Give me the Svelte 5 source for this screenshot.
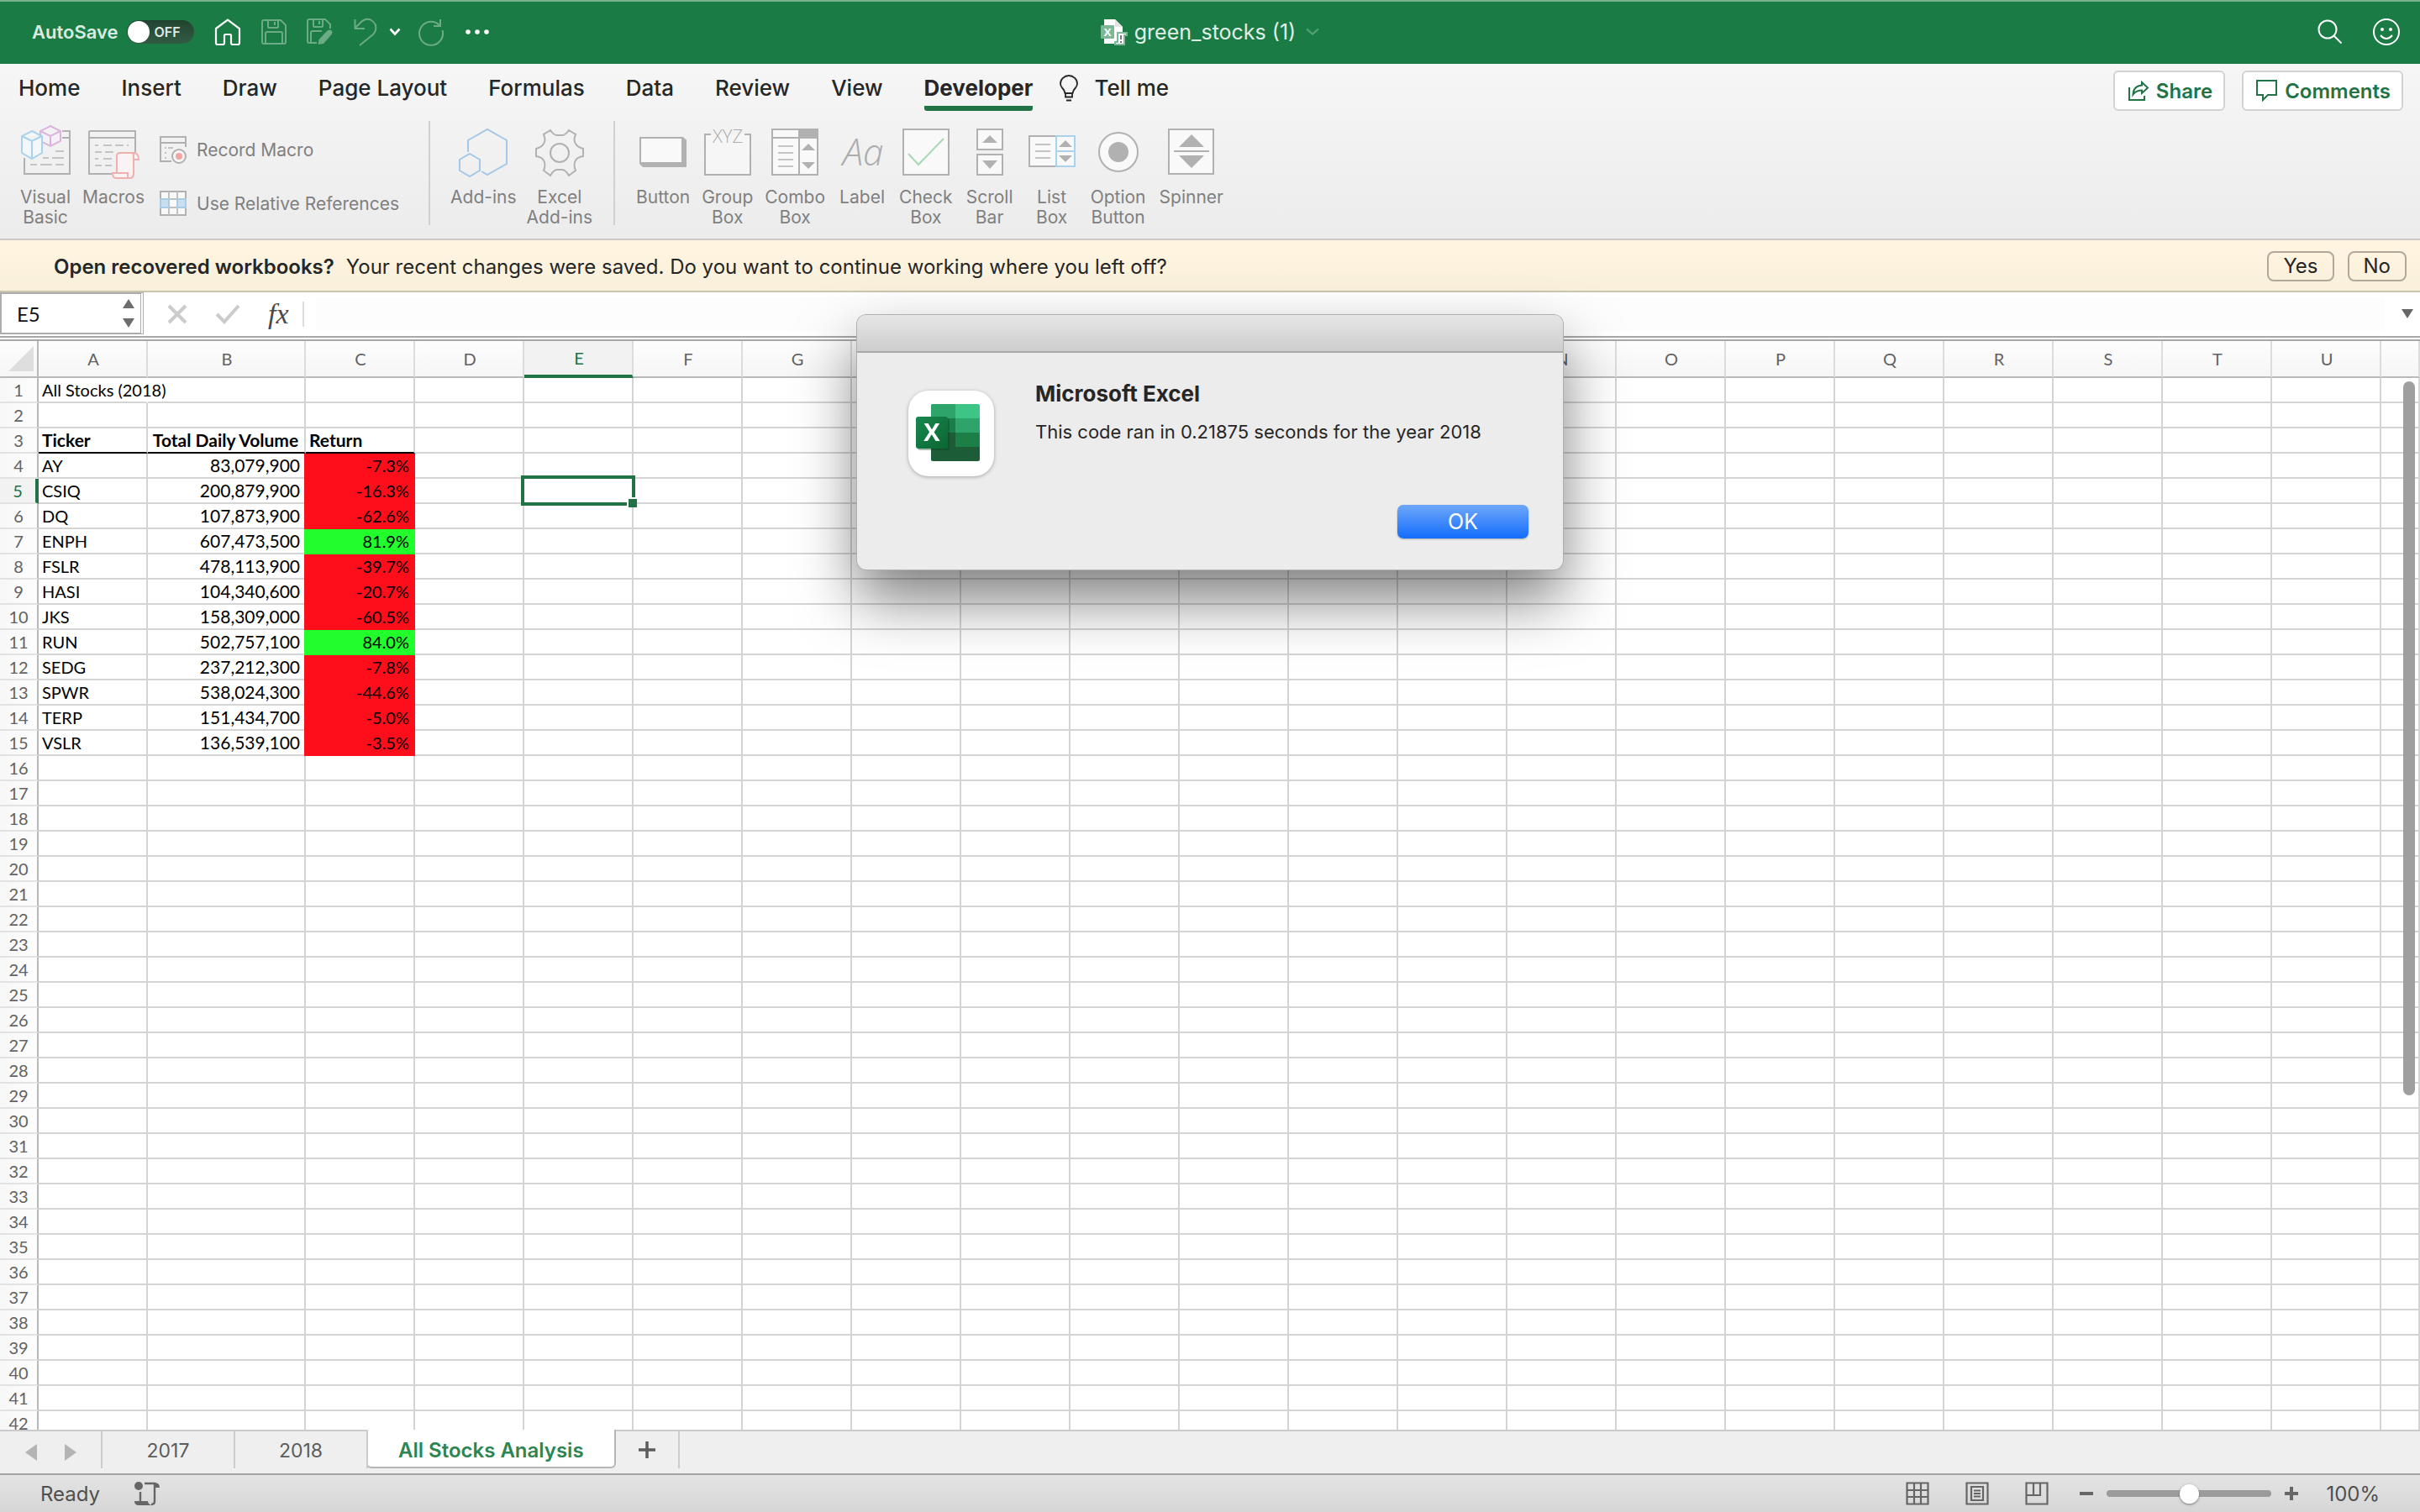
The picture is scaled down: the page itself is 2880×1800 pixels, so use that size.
<script>
  const menuTabs = ['Home', 'Insert', 'Draw', 'Page Layout', 'Formulas', 'Data', 'Review', 'View', 'Developer'];

  const columns = 'ABCDEFGHIJKLMNOPQRSTU'.split('');
  const rowNumbers = Array.from({ length: 42 }, (_, i) => i + 1);

  const stocks = [
    ['AY', '83,079,900', '-7.3%'],
    ['CSIQ', '200,879,900', '-16.3%'],
    ['DQ', '107,873,900', '-62.6%'],
    ['ENPH', '607,473,500', '81.9%'],
    ['FSLR', '478,113,900', '-39.7%'],
    ['HASI', '104,340,600', '-20.7%'],
    ['JKS', '158,309,000', '-60.5%'],
    ['RUN', '502,757,100', '84.0%'],
    ['SEDG', '237,212,300', '-7.8%'],
    ['SPWR', '538,024,300', '-44.6%'],
    ['TERP', '151,434,700', '-5.0%'],
    ['VSLR', '136,539,100', '-3.5%'],
  ];

  const cells = {
    A1: { text: 'All Stocks (2018)', kind: 'spill' },
    A3: { text: 'Ticker', kind: 'head' },
    B3: { text: 'Total Daily Volume', kind: 'head center' },
    C3: { text: 'Return', kind: 'head' },
  };
  stocks.forEach(([ticker, volume, ret], i) => {
    const row = i + 4;
    cells['A' + row] = { text: ticker, kind: '' };
    cells['B' + row] = { text: volume, kind: 'num volume' };
    cells['C' + row] = { text: ret, kind: ret.startsWith('-') ? 'num loss' : 'num gain' };
  });

  const active = { col: 'E', row: 5 };
  let zoom = $state(50);
</script>

{#snippet page(x, y, w, h)}
  <rect {x} {y} width={w} height={h} fill="#f9f9f9" stroke="#b1b1b1" stroke-width="2" />
{/snippet}

<div class="app">
  <header class="titlebar">
    <div class="quick">
      <label class="autosave">
        <span>AutoSave</span>
        <span class="switch"><input type="checkbox" aria-label="AutoSave" /><span class="knob"></span><span class="off">OFF</span></span>
      </label>
      <button class="bare home" aria-label="Home">
        <svg width="32" height="32" viewBox="0 0 32 32"><path d="M2 12 L16 1.5 L30 12 V29 Q30 31 28 31 H22 Q20 31 20 29 V20 Q20 19 19 19 H13 Q12 19 12 20 V29 Q12 31 10 31 H4 Q2 31 2 29 Z" fill="none" stroke="#fff" stroke-width="2.2" /></svg>
      </button>
      <button class="bare" aria-label="Save">
        <svg width="30" height="30" viewBox="0 0 30 30" fill="none" stroke="#6bab85" stroke-width="2"><path d="M3 1H23L29 7V27Q29 29 27 29H3Q1 29 1 27V3Q1 1 3 1Z M8 1V9Q8 10 9 10H19Q20 10 20 9V1 M16 3V7 M5 29V17Q5 15 7 15H23Q25 15 25 17V29" /></svg>
      </button>
      <button class="bare" aria-label="Save as">
        <svg width="32" height="32" viewBox="0 0 32 32" fill="none" stroke="#6bab85" stroke-width="2"><path d="M12 29H3Q1 29 1 27V3Q1 1 3 1H22L28 7V12 M8 1V9Q8 10 9 10H18Q19 10 19 9V1 M15 3V7 M5 29V17Q5 15 7 15H18" /><path d="M28 13.500 Q32 15 29.500 19 L20 30 L13.500 31 L14.500 25 L24 15 Q26 13 28 13.500Z" fill="#6bab85" stroke="none" /></svg>
      </button>
      <button class="bare" aria-label="Undo">
        <svg width="28" height="34" viewBox="0 0 28 34" fill="none" stroke="#6bab85" stroke-width="2"><path d="M1.500 2V13H13 M2 12L9 5Q14 0 20 2.500Q28 7 26 15Q25 18 23 20L7 33" /></svg>
      </button>
      <button class="bare history" aria-label="Undo history">
        <svg width="14" height="10" viewBox="0 0 14 10"><path d="M1.500 1.500L7 7.500L12.500 1.500" fill="none" stroke="#fff" stroke-width="2.600" /></svg>
      </button>
      <button class="bare" aria-label="Repeat">
        <svg width="32" height="32" viewBox="0 0 32 32" fill="none" stroke="#6bab85" stroke-width="2"><path d="M27 1V9H19 M26 8A14 14 0 1 0 29.500 14" /></svg>
      </button>
      <button class="bare" aria-label="More">
        <svg width="30" height="8" viewBox="0 0 30 8" fill="#fff"><circle cx="4" cy="4" r="2.800" /><circle cx="15" cy="4" r="2.800" /><circle cx="26" cy="4" r="2.800" /></svg>
      </button>
    </div>
    <div class="doc">
      <svg width="34" height="32" viewBox="0 0 34 32">
        <path d="M4 1H17L26 10V30H4Z" fill="#fff" /><path d="M17 1V10H26" fill="#e3e3e3" />
        <rect x="0" y="8" width="16" height="16" rx="1" fill="#7cb896" />
        <text class="logo-x" x="8" y="21" font-size="13" text-anchor="middle" fill="#fff">X</text>
        <path d="M20 17H31V20H28V31H17V28H20Z" fill="#fff" stroke="#7cb896" stroke-width="2" /><path d="M24 20V25M24 27V29" stroke="#777" stroke-width="2" />
      </svg>
      <span>green_stocks (1)</span>
      <svg class="chev" width="16" height="10" viewBox="0 0 16 10"><path d="M1 1.500L8 7.500L15 1.500" fill="none" stroke="#58a077" stroke-width="2.200" /></svg>
    </div>
    <div class="account">
      <button class="bare" aria-label="Search">
        <svg width="30" height="30" viewBox="0 0 30 30" fill="none" stroke="#fff" stroke-width="2"><circle cx="12" cy="12" r="10.500" /><path d="M19.500 19.500L28.500 28.500" /></svg>
      </button>
      <button class="bare" aria-label="Feedback">
        <svg width="32" height="32" viewBox="0 0 32 32" fill="none" stroke="#fff" stroke-width="2"><circle cx="16" cy="16" r="15" /><circle cx="11" cy="13" r="2" fill="#fff" stroke="none" /><circle cx="21" cy="13" r="2" fill="#fff" stroke="none" /><path d="M9 20Q16 28 23 20" /></svg>
      </button>
    </div>
  </header>

  <section class="ribbon">
    <div class="tabrow">
      <nav class="tabs">
        {#each menuTabs as tab}
          <button class="bare tab" class:current={tab === 'Developer'}>{tab}</button>
        {/each}
        <button class="bare tab tell">
          <svg width="22" height="32" viewBox="0 0 22 32" fill="none" stroke="#262626" stroke-width="1.800"><path d="M6.500 22Q6 18.500 3 15.500Q1 13 1 10.500A10 9.500 0 0 1 21 10.500Q21 13 19 15.500Q16 18.500 15.500 22ZM7 22V26.500H15V22M8 30.500H14" /></svg>
          Tell me
        </button>
      </nav>
      <div class="actions">
        <button class="action">
          <svg width="26" height="26" viewBox="0 0 26 26" fill="none" stroke="#217346" stroke-width="2"><path d="M2 9V24H20V19" /><path d="M17 3L24 9.500L17 16V12.500Q10 12.500 6.500 17.500Q7 7.500 17 6.500Z" /></svg>
          Share
        </button>
        <button class="action">
          <svg width="26" height="26" viewBox="0 0 26 26" fill="none" stroke="#217346" stroke-width="2"><path d="M2 1H24V18H14L8 24V18H1V1H2Z" /></svg>
          Comments
        </button>
      </div>
    </div>

    <div class="tools">
      <div class="group first">
        <button class="bare tool">
          <svg width="60" height="64" viewBox="0 3 60 64" fill="none" stroke-width="2">
            <path d="M50 10H59V61H5V42" stroke="#b1b1b1" fill="none" /><path d="M50 18H59" stroke="#b1b1b1" />
            <path d="M42 34H52M27 42H34M38 42H52M12 50H20M24 50H38M42 50H52" stroke="#c4c4c4" />
            <path d="M36 4L48 10V22L36 28L24 22V10ZM24 10L36 16L48 10M36 16V28" stroke="#d9b5dd" fill="#f5f0f6" />
            <path d="M14 10L26 16V36L14 43L2 36V16ZM2 16L14 22L26 16M14 22V43" stroke="#a9d2ec" fill="#f4f7f9" />
          </svg>
          <span>Visual<br />Basic</span>
        </button>
        <button class="bare tool">
          <svg width="60" height="64" viewBox="0 3 60 64" fill="none" stroke-width="2">
            <path d="M1 10H56V36M1 10V61H28M1 18H56" stroke="#b1b1b1" />
            <path d="M8 27H12M18 27H28M32 27H42M46 27H48M8 35H16M20 35H30M8 43H12M18 43H28M8 51H16M20 51H28" stroke="#c4c4c4" />
            <path d="M34 60V40Q34 36 38 36H54Q60 36 60 44H54V61Q54 66 49 66H33Q29 66 29 60H47V66M54 44V40Q54 36 52 36" stroke="#f1b0b0" fill="#faf3f3" />
          </svg>
          <span>Macros</span>
        </button>
        <div class="stack">
          <button class="bare line">
            <svg width="32" height="34" viewBox="0 0 32 34" fill="none" stroke="#b1b1b1" stroke-width="2"><path d="M14 31H1V2H31V14M1 9H31" /><path d="M6 15H8M10 15H16M6 21H8M6 27H8" stroke="#c4c4c4" /><circle cx="23" cy="25" r="8" fill="#f6f6f6" /><circle cx="23" cy="25" r="4" fill="#f2a5a5" stroke="none" /></svg>
            Record Macro
          </button>
          <button class="bare line">
            <svg width="32" height="30" viewBox="0 0 32 30" fill="none" stroke="#b1b1b1" stroke-width="2"><rect x="1" y="1" width="30" height="28" fill="#f9f9f9" /><path d="M11 1V29M21 1V29M1 10H31M1 20H31" stroke="#c0c0c0" /><path d="M1 10H11V20H1ZM21 10H31V20H21Z" fill="#c9dff0" stroke="#a9cbe4" /></svg>
            Use Relative References
          </button>
        </div>
      </div>
      <div class="group addins">
        <button class="bare tool">
          <svg width="60" height="64" viewBox="0 0 60 64" fill="none" stroke="#a5c8e8" stroke-width="2"><path d="M12 32V18L35 5L58 18V46L35 59L28 55" /><path d="M14 34L26 41V54L14 61L2 54V41Z" /></svg>
          <span>Add-ins</span>
        </button>
        <button class="bare tool">
          <svg width="60" height="64" viewBox="0 0 60 64" fill="none" stroke="#b1b1b1" stroke-width="2"><path d="M19 6Q23 12 27 12H33Q37 12 41 6L49 11Q46 18 49 22Q51 26 58 28V37Q51 38 49 42Q46 47 49 54L41 60Q37 53 33 53H27Q23 53 19 60L11 54Q14 47 11 42Q9 38 2 37V28Q9 26 11 22Q14 18 11 11Z" /><circle cx="30" cy="33" r="11" /></svg>
          <span>Excel<br />Add-ins</span>
        </button>
      </div>
      <div class="group controls">
        <button class="bare tool">
          <svg width="60" height="64" viewBox="0 0 60 64"><path d="M2 14H54L58 18V50H6L2 46Z" fill="#b1b1b1" /><rect x="4" y="16" width="48" height="28" fill="#f9f9f9" /></svg>
          <span>Button</span>
        </button>
        <button class="bare tool">
          <svg width="60" height="64" viewBox="0 0 60 64"><path d="M10 11H3V59H57V11H50" fill="#f6f6f6" stroke="#b1b1b1" stroke-width="2" /><text class="glyph" x="30" y="21" font-size="22" text-anchor="middle">XYZ</text></svg>
          <span>Group<br />Box</span>
        </button>
        <button class="bare tool">
          <svg width="60" height="64" viewBox="0 0 60 64">{@render page(3, 5, 54, 54)}<path d="M3 15H57M35 15V59" stroke="#b1b1b1" stroke-width="2" /><rect x="34" y="5" width="23" height="10" fill="#b1b1b1" /><path d="M10 25H28M10 33H28M10 41H28M10 49H28" stroke="#c4c4c4" stroke-width="2" /><path d="M38 30L46 22L54 30ZM38 44L46 52L54 44Z" fill="#b1b1b1" /></svg>
          <span>Combo<br />Box</span>
        </button>
        <button class="bare tool">
          <svg width="60" height="64" viewBox="0 0 60 64"><text class="glyph slanted" x="31" y="48" font-size="44" text-anchor="middle">Aa</text></svg>
          <span>Label</span>
        </button>
        <button class="bare tool">
          <svg width="60" height="64" viewBox="0 0 60 64">{@render page(3, 5, 54, 54)}<path d="M9 34L21 47L51 16" fill="none" stroke="#a9d8b5" stroke-width="2" /></svg>
          <span>Check<br />Box</span>
        </button>
        <button class="bare tool">
          <svg width="60" height="64" viewBox="0 0 60 64">{@render page(15, 5, 30, 24)}{@render page(15, 35, 30, 24)}<path d="M21 21L30 12L39 21ZM21 42L30 52L39 42Z" fill="#b1b1b1" /></svg>
          <span>Scroll<br />Bar</span>
        </button>
        <button class="bare tool">
          <svg width="60" height="64" viewBox="0 0 60 64">{@render page(3, 13, 32, 36)}<path d="M10 23H28M10 31H28M10 39H28" stroke="#c4c4c4" stroke-width="2" /><rect x="35" y="13" width="22" height="36" fill="#f9f9f9" stroke="#a9d2ec" stroke-width="2" /><path d="M35 31H57" stroke="#a9d2ec" stroke-width="2" /><path d="M38 26L46 18L54 26ZM38 36L46 44L54 36Z" fill="#b1b1b1" /></svg>
          <span>List<br />Box</span>
        </button>
        <button class="bare tool wide">
          <svg width="60" height="64" viewBox="0 0 60 64"><circle cx="30" cy="32" r="23" fill="#f9f9f9" stroke="#b1b1b1" stroke-width="2" /><circle cx="30" cy="32" r="12" fill="#b1b1b1" /></svg>
          <span>Option<br />Button</span>
        </button>
        <button class="bare tool">
          <svg width="60" height="64" viewBox="0 0 60 64">{@render page(3, 5, 53, 53)}<path d="M9 31H51" stroke="#b1b1b1" stroke-width="2" /><path d="M15 26L30 11L45 26ZM15 36L30 51L45 36Z" fill="#b1b1b1" /></svg>
          <span>Spinner</span>
        </button>
      </div>
    </div>
  </section>

  <section class="notice">
    <p><strong>Open recovered workbooks?</strong><span>Your recent changes were saved. Do you want to continue working where you left off?</span></p>
    <div class="answers">
      <button>Yes</button>
      <button>No</button>
    </div>
  </section>

  <section class="formula">
    <div class="namebox">
      <input type="text" value="E5" aria-label="Name box" />
      <svg width="16" height="36" viewBox="0 0 16 36" fill="#6d6d6d"><path d="M1 12L8 1L15 12ZM1 24L8 35L15 24Z" /></svg>
    </div>
    <div class="edit">
      <button class="bare" aria-label="Cancel"><svg width="24" height="24" viewBox="0 0 24 24"><path d="M2 2L22 22M22 2L2 22" stroke="#cbcbcb" stroke-width="4" /></svg></button>
      <button class="bare" aria-label="Enter"><svg width="30" height="24" viewBox="0 0 30 24"><path d="M2 12L11 21L28 2" fill="none" stroke="#cbcbcb" stroke-width="4" /></svg></button>
      <button class="bare fx" aria-label="Insert function">fx</button>
    </div>
    <input class="entry" type="text" aria-label="Formula" />
    <button class="bare expand" aria-label="Expand formula bar"><svg width="14" height="12" viewBox="0 0 14 12"><path d="M0 0H14L7 11Z" fill="#666" /></svg></button>
  </section>

  <main class="sheet">
    <table>
      <colgroup>
        <col class="w-num" />
        {#each columns as c}<col class={c === 'B' ? 'w-wide' : 'w-col'} />{/each}
        <col />
      </colgroup>
      <thead>
        <tr>
          <th class="corner"><svg width="30" height="30" viewBox="0 0 30 30"><path d="M30 0V30H0Z" fill="#dedede" /></svg></th>
          {#each columns as c}<th scope="col" class:on={c === active.col}>{c}</th>{/each}
          <th></th>
        </tr>
      </thead>
      <tbody>
        {#each rowNumbers as r}
          <tr>
            <th scope="row" class:on={r === active.row}>{r}</th>
            {#each columns as c}
              <td class={cells[c + r]?.kind}>{#if cells[c + r]}{cells[c + r].text}{/if}{#if c === active.col && r === active.row}<span class="selection"></span>{/if}</td>
            {/each}
            <td></td>
          </tr>
        {/each}
      </tbody>
    </table>
    <div class="scrollbar"></div>
  </main>

  <footer class="sheettabs">
    <div class="arrows">
      <button class="bare" aria-label="Previous sheet"><svg width="16" height="22" viewBox="0 0 16 22"><path d="M15 1V21L1 11Z" fill="#b4b4b4" /></svg></button>
      <button class="bare" aria-label="Next sheet"><svg width="16" height="22" viewBox="0 0 16 22"><path d="M1 1V21L15 11Z" fill="#b4b4b4" /></svg></button>
    </div>
    <button class="bare sheettab">2017</button>
    <button class="bare sheettab">2018</button>
    <button class="bare sheettab chosen">All Stocks Analysis</button>
    <button class="bare add" aria-label="Add sheet"><svg width="20" height="20" viewBox="0 0 20 20"><path d="M10 0V20M0 10H20" stroke="#5c5c5c" stroke-width="3.500" /></svg></button>
  </footer>

  <footer class="status">
    <span>Ready</span>
    <button class="bare" aria-label="Record macro">
      <svg width="32" height="30" viewBox="0 0 32 30"><circle cx="5" cy="6" r="5" fill="#666" /><path d="M12 3H24V24Q24 28 20 28M7 13V25" fill="none" stroke="#666" stroke-width="2.400" /><path d="M22 2Q30 1 30 8H25V5ZM0 24H16Q16 28 21 29H5Q0 29 0 24Z" fill="#666" /></svg>
    </button>
    <div class="views">
      <button class="bare" aria-label="Normal view"><svg width="28" height="28" viewBox="0 0 28 28" fill="none" stroke="#666" stroke-width="2.200"><path d="M1.500 1.500H26.500V26.500H1.500ZM10 1V27M18 1V27M1 10H27M1 18H27" /></svg></button>
      <button class="bare" aria-label="Page layout view"><svg width="28" height="28" viewBox="0 0 28 28" fill="none" stroke="#666" stroke-width="2.200"><path d="M1.500 1.500H26.500V26.500H1.500ZM7 6H21V22H7ZM10 10.500H18M10 14H18M10 17.500H18" /></svg></button>
      <button class="bare" aria-label="Page break preview"><svg width="28" height="28" viewBox="0 0 28 28" fill="none" stroke="#666" stroke-width="2.200"><path d="M1.500 1.500H26.500V26.500H1.500ZM1 16H18V1M10 1V16" /></svg></button>
    </div>
    <div class="zoom">
      <button class="bare" aria-label="Zoom out"><svg width="16" height="16" viewBox="0 0 16 16"><path d="M0 8H16" stroke="#666" stroke-width="4" /></svg></button>
      <input type="range" min="0" max="100" bind:value={zoom} aria-label="Zoom" />
      <button class="bare" aria-label="Zoom in"><svg width="16" height="16" viewBox="0 0 16 16"><path d="M0 8H16M8 0V16" stroke="#666" stroke-width="4" /></svg></button>
    </div>
    <span class="percent">100%</span>
  </footer>

  <div class="dialog" role="alertdialog" aria-labelledby="dlg-title" aria-describedby="dlg-text">
    <div class="dialog-bar"></div>
    <div class="dialog-body">
      <svg class="appicon" width="104" height="104" viewBox="0 0 104 104">
        <defs><linearGradient id="xg" x1="0" y1="0" x2="1" y2="1"><stop offset="0" stop-color="#18884f" /><stop offset="1" stop-color="#0b6631" /></linearGradient></defs>
        <rect x="1" y="1" width="102" height="102" rx="24" fill="#fff" />
        <path d="M29 17H57V34H28V18Z" fill="#2ea36a" /><path d="M57 17H84Q86 17 86 19V34H57Z" fill="#3dc586" />
        <rect x="28" y="34" width="29" height="34" fill="#1b7d49" /><rect x="57" y="34" width="29" height="17" fill="#2ea36a" /><rect x="57" y="51" width="29" height="17" fill="#1b7f46" />
        <path d="M28 68V51H57V68H86V83Q86 85 84 85H30Q28 85 28 83Z" fill="#1c5c37" />
        <rect x="12" y="34" width="38" height="38" rx="3" fill="#0a3d20" opacity="0.350" />
        <rect x="10" y="32" width="38" height="38" rx="3" fill="url(#xg)" />
        <text class="logo-x" x="29" y="61" font-size="29" text-anchor="middle" fill="#fff">X</text>
      </svg>
      <div class="dialog-text">
        <h2 id="dlg-title">Microsoft Excel</h2>
        <p id="dlg-text">This code ran in 0.21875 seconds for the year 2018</p>
      </div>
    </div>
    <div class="dialog-foot"><button class="ok">OK</button></div>
  </div>
</div>

<style>
  :global(body) { margin: 0; }
  .app { position: relative; height: 100vh; display: flex; flex-direction: column; overflow: hidden; font-family: Inter, 'Liberation Sans', sans-serif; color: #262626; background: #fff; }
  .app * { box-sizing: border-box; }
  button, input { font-family: inherit; color: inherit; }
  svg { display: block; flex: none; overflow: visible; }
  .bare { border: 0; padding: 0; margin: 0; background: none; }
  .glyph { font-family: 'Open Sans', 'Noto Sans', sans-serif; font-weight: 300; fill: #acacac; }
  .slanted { font-style: italic; }
  .logo-x { font-family: 'Open Sans', 'Noto Sans', sans-serif; font-weight: 700; }

  .titlebar { display: grid; grid-template-columns: 1fr auto 1fr; align-items: center; height: 76px; padding-bottom: 2px; background: #1a7b44; border-top: 2px solid #79b08e; flex: none; }
  .quick, .doc, .account { display: flex; align-items: center; }
  .quick { gap: 24px; padding-left: 38px; }
  .history { margin: 0 -4px 0 -10px; }
  .account { justify-content: flex-end; gap: 36px; padding-right: 24px; }
  .autosave { display: flex; align-items: center; gap: 10px; font-size: 22px; font-weight: 600; color: #d9ebe0; }
  .switch { display: flex; align-items: center; gap: 4px; width: 80px; height: 28px; padding: 1px; border-radius: 14px; background: linear-gradient(#22442f, #315b43); }
  .switch input { appearance: none; width: 0; height: 0; margin: 0; }
  .knob { width: 26px; height: 26px; margin-left: -4px; border-radius: 50%; background: #fff; }
  .off { font-size: 16px; margin-left: 2px; color: #e0eae4; }
  .doc { gap: 6px; font-size: 25px; color: #e0efe6; }
  .chev { margin-left: 6px; }

  .ribbon { flex: none; height: 210px; border-bottom: 2px solid #c9c9c9; background: linear-gradient(#f6f6f6, #ececec); }
  .tabrow { display: flex; justify-content: space-between; align-items: flex-start; padding: 8px 20px 0 22px; }
  .tabs { display: flex; gap: 49px; }
  .tab { height: 48px; line-height: 42px; font-size: 26px; font-weight: 500; color: #262626; border-bottom: 6px solid transparent; }
  .tab.current { font-weight: 700; border-bottom-color: #217346; border-radius: 3px; }
  .tell { display: flex; align-items: center; gap: 19px; margin-left: -17px; }
  .actions { display: flex; gap: 20px; }
  .action { display: flex; align-items: center; gap: 8px; height: 48px; padding: 0 13px 0 15px; border: 2px solid #d2d2d2; border-radius: 6px; background: #fff; font-size: 24px; font-weight: 600; color: #217346; }

  .tools { display: flex; padding: 12px 0 0 24px; }
  .group { display: flex; height: 124px; border-right: 2px solid #d0d0d0; align-items: flex-start; }
  .group.controls { border: 0; gap: 14px; padding-left: 25px; }
  .group.addins { gap: 12px; padding: 0 25px 0 24px; }
  .group.first { gap: 14px; padding-right: 35px; }
  .tool { display: flex; flex-direction: column; align-items: center; gap: 10px; min-width: 60px; padding-top: 5px; }
  .tool.wide { min-width: 70px; }
  .tool span { font-size: 21px; line-height: 24px; color: #808080; }
  .tool, .line { color: #808080; }
  .stack { display: flex; flex-direction: column; gap: 30px; padding: 17px 0 0 4px; }
  .line { display: flex; align-items: center; gap: 12px; height: 34px; font-size: 21px; }

  .notice { flex: none; display: flex; justify-content: space-between; align-items: center; height: 62px; padding: 2px 16px 0 64px; background: linear-gradient(#fff5e1, #f9f0db); border-bottom: 2px solid #cbc4b0; font-size: 24px; }
  .notice p { display: flex; gap: 14px; margin: 0; }
  .notice strong { font-weight: 600; }
  .answers { display: flex; gap: 16px; }
  .answers button { height: 36px; padding: 0 17px; border: 2px solid #b0a999; border-radius: 8px; background: none; font-size: 24px; line-height: 32px; }

  .formula { flex: none; display: flex; align-items: center; height: 58px; border-bottom: 6px double #a8a8a8; background: #fff; }
  .namebox { display: flex; align-items: center; width: 171px; height: 50px; padding: 0 6px 0 18px; border: 2px solid #adadad; border-right: 4px double #adadad; align-self: flex-start; }
  .namebox input { flex: 1; min-width: 0; border: 0; padding: 0; font-family: Lato, 'Liberation Sans', sans-serif; font-size: 24px; background: none; color: #111; }
  .edit { display: flex; align-items: center; gap: 33px; padding: 0 16px 0 28px; border-right: 2px solid #ddd; height: 30px; }
  .fx { font-family: 'Liberation Serif', serif; font-style: italic; font-size: 34px; line-height: 30px; color: #4a4a4a; }
  .entry { flex: 1; min-width: 0; height: 40px; margin-left: 14px; border: 0; background: #fdfdfd; font-size: 24px; }
  .expand { padding: 0 8px 0 20px; }

  .sheet { flex: 1; min-height: 0; position: relative; overflow: hidden; font-family: Lato, 'Liberation Sans', sans-serif; }
  table { width: 100%; table-layout: fixed; border-collapse: separate; border-spacing: 0; }
  .w-num { width: 46px; }
  .w-col { width: 130px; }
  .w-wide { width: 188px; }
  th, td { height: 30px; padding: 0 5px 0 4px; font-size: 20px; line-height: 26px; white-space: nowrap; border-right: 2px solid #d4d4d4; border-bottom: 2px solid #d4d4d4; }
  th { padding: 0; font-weight: 400; color: #626262; }
  thead th { height: 44px; padding-left: 2px; background: linear-gradient(#fdfdfd, #f6f6f6); border-right-color: #dcdcdc; border-bottom-color: #b9b9b9; }
  thead th.on { color: #217346; background: #f2f2f2; border-bottom: 4px solid #217346; }
  .corner svg { margin: 0 0 0 8px; }
  tbody th { background: linear-gradient(90deg, #f7f7f7, #fdfdfd); border-right-color: #b9b9b9; border-bottom-color: #e2e2e2; }
  thead th.corner { border-right-color: #b9b9b9; }
  tbody th.on { color: #217346; background: #f2f2f2; border-right: 4px solid #217346; }
  td { position: relative; color: #000; }
  td.spill { border-right-color: transparent; }
  td.head { font-size: 21px; font-weight: 700; border-bottom-color: #000; }
  td.center { text-align: center; }
  td.num { text-align: right; }
  td.volume { font-size: 21px; }
  td.loss { background: #fe0d1b; border-color: #fe0d1b; box-shadow: -2px 0 #fe0d1b; }
  td.gain { background: #21fe2c; border-color: #21fe2c; box-shadow: -2px 0 #21fe2c; }
  .selection { position: absolute; z-index: 1; inset: -4px; border: 4px solid #217346; }
  .selection::after { content: ''; box-sizing: border-box; position: absolute; right: -6px; bottom: -6px; width: 12px; height: 12px; background: #217346; border: solid #fff; border-width: 2px 0 0 2px; }
  .scrollbar { position: absolute; top: 48px; right: 6px; width: 14px; height: 850px; border-radius: 7px; background: #9f9f9f; }

  .sheettabs { flex: none; display: flex; height: 52px; background: #efefef; box-shadow: inset 0 2px #cbcbcb; padding-bottom: 6px; }
  .arrows { display: flex; align-items: center; justify-content: center; gap: 31px; width: 122px; padding-top: 8px; border-right: 2px solid #ccc; }
  .sheettab { width: 158px; padding-top: 4px; border-right: 2px solid #ccc; font-size: 23px; color: #5c5c5c; }
  .sheettab.chosen { width: auto; padding: 4px 36px 0; border: 2px solid #b5b5b5; border-top: 0; border-left-color: #ccc; border-radius: 0 0 6px 6px; background: #fff; font-size: 24px; font-weight: 600; color: #2b8554; margin-left: -2px; }
  .add { width: 76px; padding-top: 2px; border-right: 2px solid #ccc; display: grid; place-items: center; }

  .status { flex: none; display: flex; align-items: center; height: 46px; padding: 0 48px; border-top: 2px solid #a3a3a3; background: linear-gradient(#e4e4e4, #d6d6d6); font-size: 24px; color: #505050; gap: 41px; }
  .views { display: flex; gap: 43px; margin-left: auto; }
  .zoom { display: flex; align-items: center; gap: 16px; margin-left: -4px; }
  .zoom input { appearance: none; width: 196px; height: 8px; margin: 0; border-radius: 4px; background: #9b9b9b; }
  .zoom input::-webkit-slider-thumb { appearance: none; width: 23px; height: 23px; border-radius: 50%; background: #fff; box-shadow: 0 1px 3px #777; }
  .percent { margin-left: -8px; }

  .dialog { position: absolute; top: 375px; left: 50%; transform: translateX(-50%); width: 840px; border-radius: 11px; overflow: hidden; background: #ececec; box-shadow: 0 0 0 1px #b0b0b0, 0 36px 70px rgba(0, 0, 0, 0.5); }
  .dialog-bar { height: 45px; border-bottom: 2px solid #a9a9a9; background: linear-gradient(#e6e6e6, #cdcdcd); }
  .dialog-body { display: flex; gap: 48px; padding: 33px 60px 0; }
  .appicon { margin-top: 11px; filter: drop-shadow(0 1px 2px rgba(0, 0, 0, 0.3)); }
  .dialog-text h2 { margin: 0; font-size: 26px; line-height: 32px; font-weight: 700; }
  .dialog-text p { margin: 14px 0 0; font-size: 22px; line-height: 30px; }
  .dialog-foot { display: flex; justify-content: flex-end; padding: 33px 41px 37px; }
  .ok { width: 156px; height: 40px; border: 0; border-radius: 7px; background: linear-gradient(#6da7fa, #146dfd); color: #fff; font-size: 25px; box-shadow: 0 1px 2px rgba(0, 0, 0, 0.3); }
</style>
